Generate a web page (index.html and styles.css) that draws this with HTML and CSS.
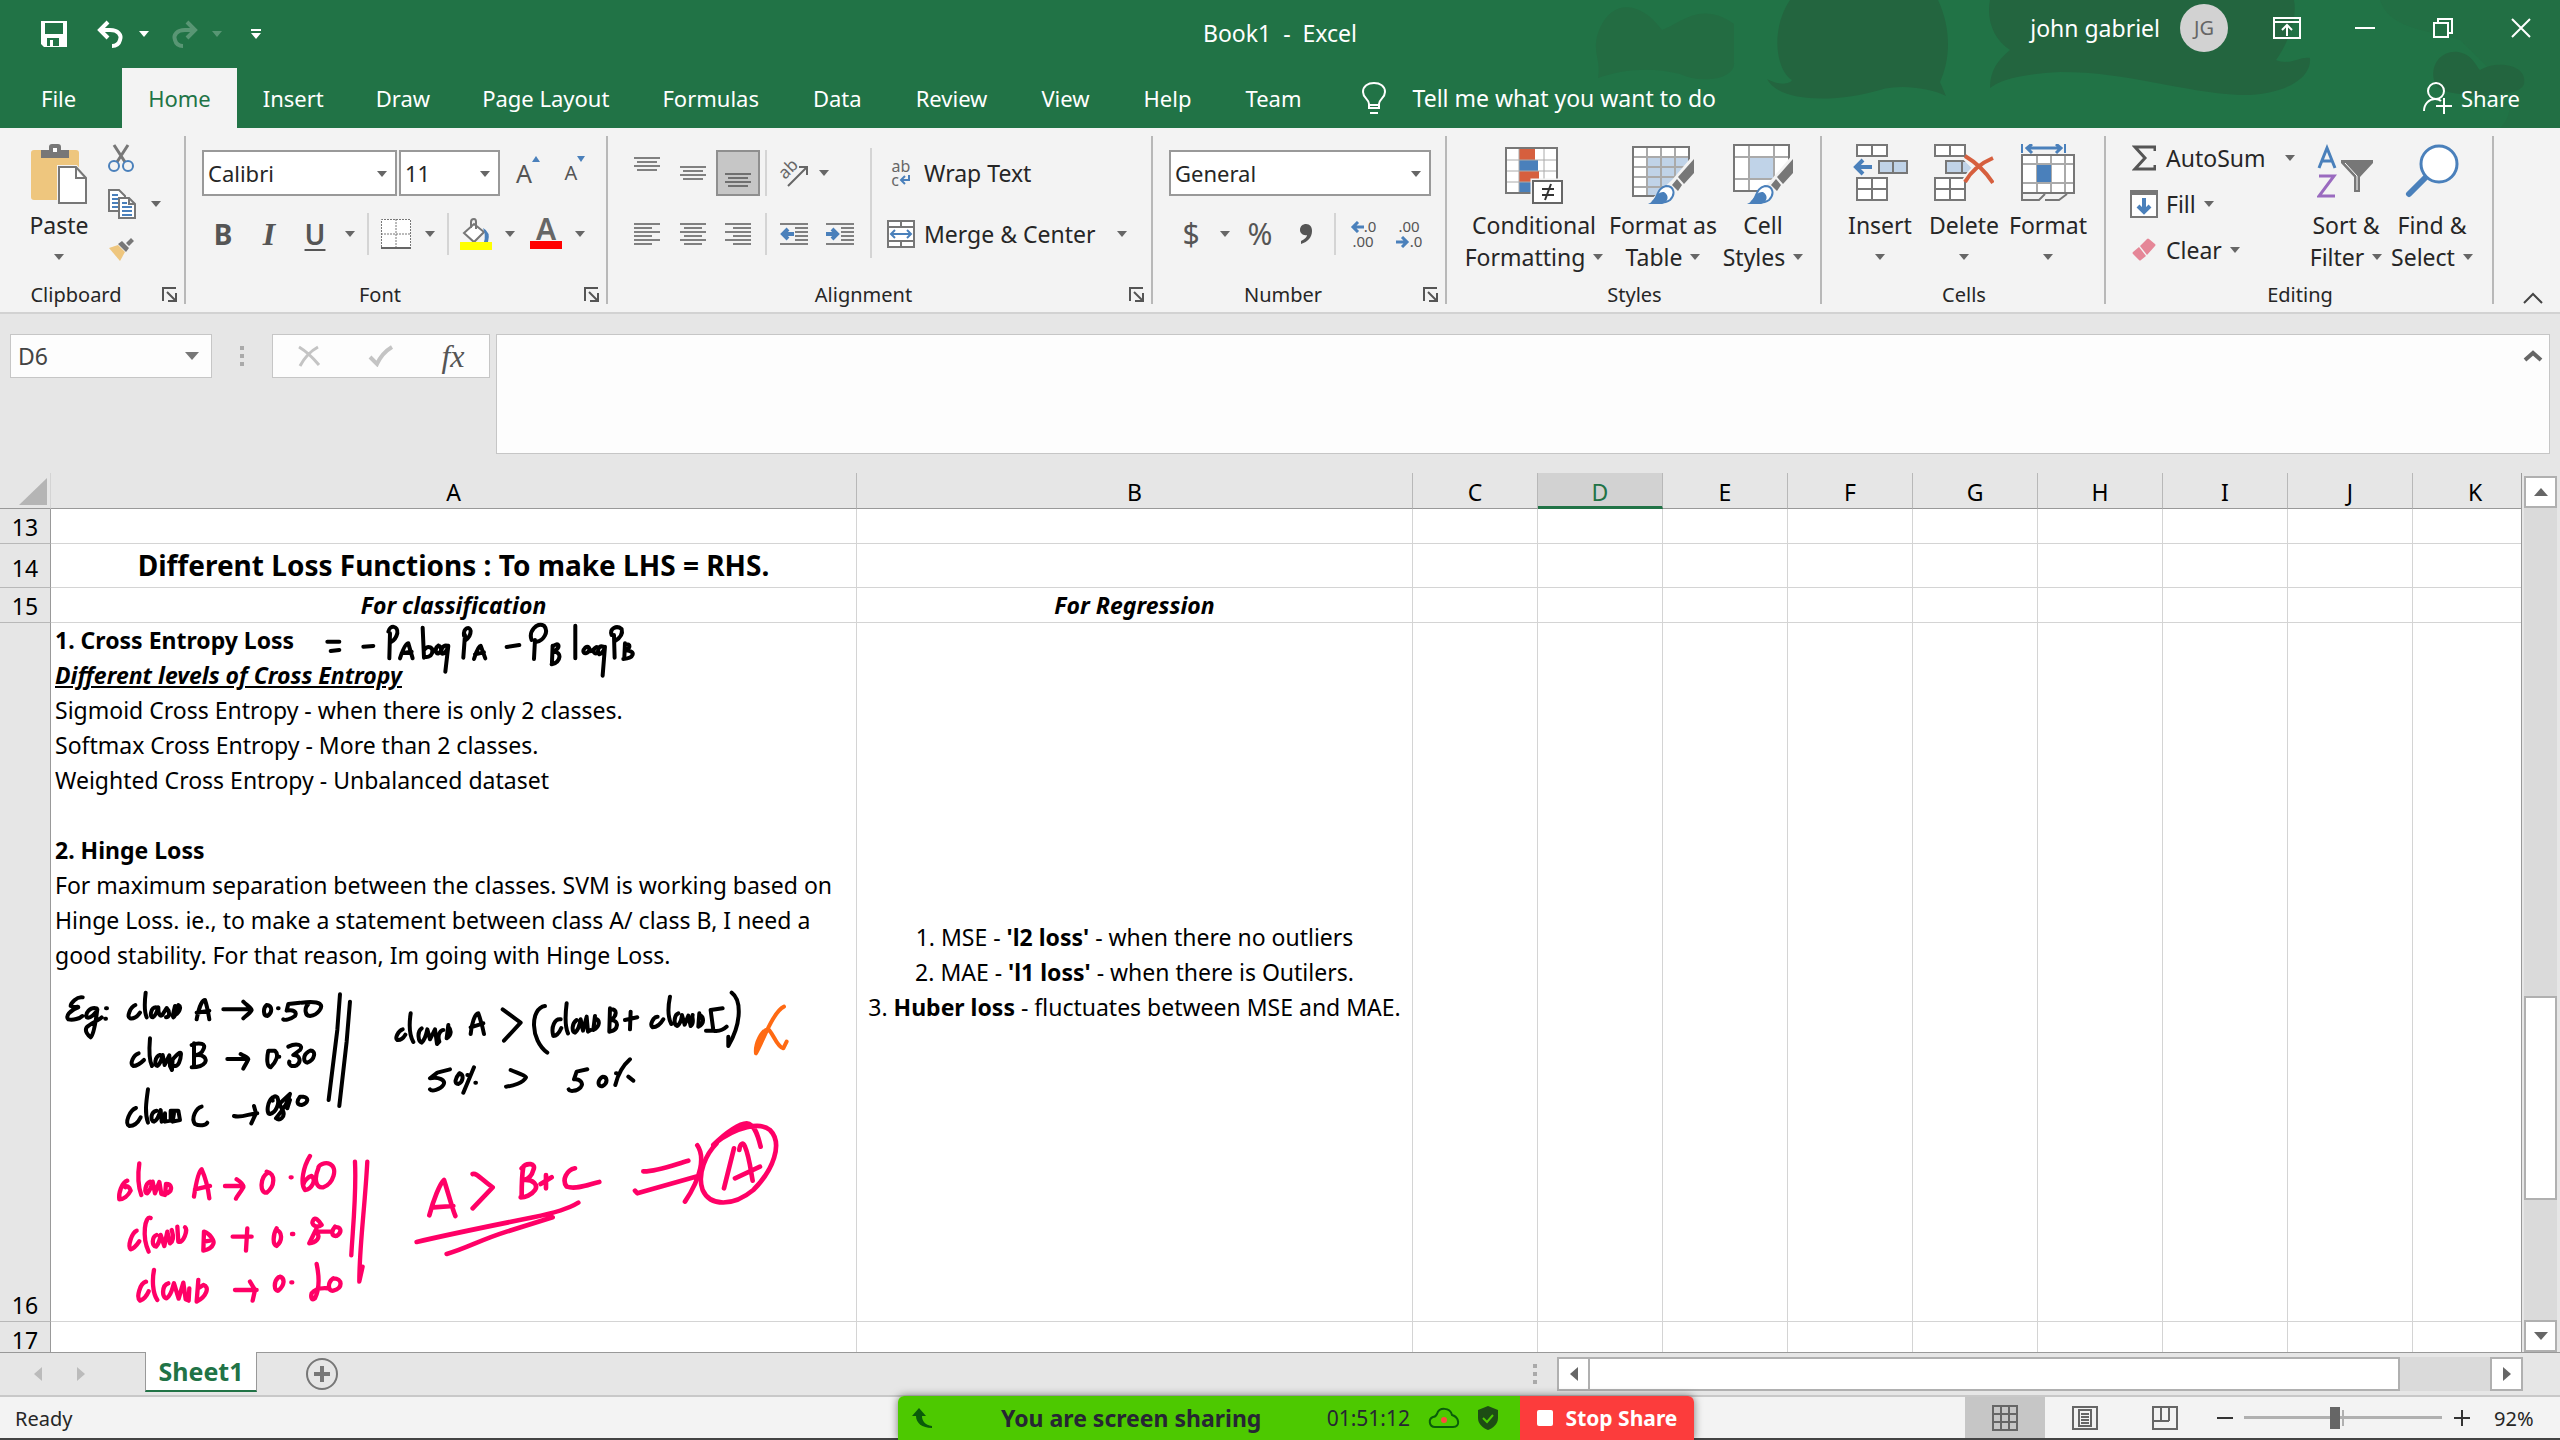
FILE: index.html
```
<!DOCTYPE html>
<html lang="en">
<head>
<meta charset="utf-8">
<title>Book1 - Excel</title>
<link rel="stylesheet" href="styles.css">
</head>
<body>
<header class="top">
  <svg class="art" width="1060" height="128" viewBox="1500 0 1060 128" aria-hidden="true">
    <path fill="#236c42" d="M1598 78C1602 60 1590 50 1600 28C1612 0 1640 0 1662 30C1680 24 1700 0 1734 24V62C1736 80 1700 84 1680 74C1650 66 1620 70 1598 78Z"/>
    <path fill="#23653f" d="M1790 0H1938C1952 30 1950 60 1940 82L1946 96C1930 88 1900 84 1880 90C1840 102 1780 104 1767 79C1780 86 1790 84 1792 80C1776 70 1770 30 1790 0Z"/>
    <path fill="#23653f" d="M1990 0H2294C2298 20 2286 46 2276 60C2290 66 2300 56 2310 58C2312 80 2280 96 2240 95C2180 92 2130 72 2060 72C2020 74 2000 80 1990 88C1990 70 1998 60 2010 50C1994 40 1986 20 1990 0Z"/>
    <path fill="#236c42" d="M2380 0H2560V128H2500C2530 100 2480 60 2460 40C2430 30 2390 30 2380 0Z" opacity=".5"/>
    <path fill="#23653f" d="M2434 80C2430 62 2444 50 2458 52C2472 54 2476 66 2480 70C2496 60 2528 64 2524 84C2520 96 2480 98 2460 94C2446 92 2436 90 2434 80Z"/>
  </svg>
  <div class="titlebar">
    <div class="quick">
      <button class="q-save" aria-label="Save"><svg width="26" height="26" viewBox="0 0 26 26"><path fill="#fff" fill-rule="evenodd" d="M0 0H26V26H3L0 23ZM4 2V13H22V2ZM6 17V25H9V19H12V25H18V17Z"/></svg></button>
      <button aria-label="Undo"><svg width="28" height="28" viewBox="0 0 28 28"><path fill="none" stroke="#fff" stroke-width="4" d="M11 2L3 10L11 18M3 10H13C21 10 25 15 23 20C22 24 19 26 15 26"/></svg></button>
      <span class="caret"></span>
      <button class="faded q-redo" aria-label="Redo"><svg width="28" height="28" viewBox="0 0 28 28"><path fill="none" stroke="#fff" stroke-width="4" d="M17 2L25 10L17 18M25 10H15C7 10 3 15 5 20C6 24 9 26 13 26"/></svg></button>
      <span class="caret faded"></span>
      <button class="q-more" aria-label="Customize Quick Access Toolbar"><svg width="10" height="10" viewBox="0 0 10 10"><path fill="#fff" d="M0 0H10V2H0ZM0 4H10L5 10Z"/></svg></button>
    </div>
    <h1 class="title">Book1&nbsp; -&nbsp; Excel</h1>
    <div class="account">
      <span>john gabriel</span>
      <span class="avatar">JG</span>
      <button class="win" aria-label="Ribbon Display Options"><svg width="28" height="22" viewBox="0 0 28 22" fill="none" stroke="#fff" stroke-width="2"><path d="M1 1H27V21H1ZM1 5H27M14 19V9M9 13L14 8L19 13"/></svg></button>
      <button class="win" aria-label="Minimize"><svg width="20" height="20" viewBox="0 0 20 20"><path stroke="#fff" stroke-width="2" d="M0 10H20"/></svg></button>
      <button class="win" aria-label="Restore"><svg width="20" height="20" viewBox="0 0 20 20" fill="none" stroke="#fff" stroke-width="2"><path d="M1 5H15V19H1ZM5 5V1H19V15H15"/></svg></button>
      <button class="win" aria-label="Close"><svg width="20" height="20" viewBox="0 0 20 20"><path stroke="#fff" stroke-width="2" d="M1 1L19 19M19 1L1 19"/></svg></button>
    </div>
  </div>
  <nav class="tabs">
    <button class="tab file">File</button>
    <button class="tab active">Home</button>
    <button class="tab">Insert</button>
    <button class="tab">Draw</button>
    <button class="tab">Page Layout</button>
    <button class="tab">Formulas</button>
    <button class="tab">Data</button>
    <button class="tab">Review</button>
    <button class="tab">View</button>
    <button class="tab">Help</button>
    <button class="tab">Team</button>
    <button class="tell"><svg width="24" height="32" viewBox="0 0 24 32" fill="none" stroke="#fff" stroke-width="2"><path d="M7 22C7 17 1 16 1 10C1 4 6 1 12 1S23 4 23 10C23 16 17 17 17 22V26H7ZM7 23H17M8 31H16"/></svg>Tell me what you want to do</button>
    <button class="share"><svg width="30" height="32" viewBox="0 0 30 32" fill="none" stroke="#fff" stroke-width="2"><circle cx="13" cy="9" r="8"/><path d="M1 29C1 22 6 17 12 17C15 17 17 18 18 19M21 16V32M13 24H29"/></svg>Share</button>
  </nav>
</header>

<section class="ribbon">
  <div class="group g-clip">
    <div class="body">
      <button class="big w84"><svg width="56" height="60" viewBox="0 0 56 60"><path fill="#eec67e" d="M0 9Q0 6 3 6H45Q48 6 48 9V53Q48 56 45 56H3Q0 56 0 53Z"/><path fill="#777" d="M10 6H18V3Q18 0 21 0H27Q30 0 30 3V6H38V14H10Z"/><path fill="#fff" d="M22 4H26V8H22Z"/><path fill="#fff" stroke="#f3f3f3" stroke-width="4" d="M28 23H45L55 34V59H28Z"/><path fill="#fff" stroke="#777" stroke-width="2" d="M28 23H45L55 34V59H28ZM45 23V34H55"/></svg><span>Paste</span><span><i class="caret"></i></span></button>
      <div class="stack tight">
        <button aria-label="Cut"><svg width="26" height="28" viewBox="0 0 26 28"><path fill="none" stroke="#777" stroke-width="3" d="M6 1L17 18M20 1L9 18"/><g fill="none" stroke="#4a80bb" stroke-width="2"><circle cx="6" cy="22" r="5"/><circle cx="20" cy="22" r="5"/></g></svg></button>
        <button aria-label="Copy"><svg class="copyicon" width="28" height="30" viewBox="0 0 28 30"><path fill="#fff" stroke="#777" stroke-width="2" d="M1 1H11L17 7V22H1Z"/><path stroke="#4a80bb" stroke-width="2" d="M4 6H10M4 10H10M4 14H10M4 18H10"/><path fill="#fff" stroke="#777" stroke-width="2" d="M11 9H21L27 15V29H11ZM21 9V15H27"/><path stroke="#4a80bb" stroke-width="2" d="M14 14H19M14 18H24M14 22H24M14 26H24"/></svg><i class="caret"></i></button>
        <button aria-label="Format Painter"><svg width="26" height="24" viewBox="0 0 26 24"><path fill="#eec67e" d="M1 10L10 7L17 14L12 23Z"/><path fill="#777" d="M10 6L14 3L21 10L18 14ZM18 5L23 0L26 3L21 8Z"/></svg></button>
      </div>
    </div>
    <div class="caption"><span>Clipboard</span><button aria-label="Clipboard settings"><svg width="15" height="15" viewBox="0 0 15 15" fill="none" stroke="#555" stroke-width="2"><path d="M1 14V1H14M5 5L13 13M14 6V14H6"/></svg></button></div>
  </div>
  <div class="group g-font">
    <div class="body"><div class="rows">
      <div class="line r1">
        <span class="combo c-font"><select aria-label="Font"><option>Calibri</option></select></span>
        <span class="combo c-size"><select aria-label="Font Size"><option>11</option></select></span>
        <button class="w52 grow" aria-label="Increase Font Size"><span>A</span><svg width="8" height="6"><path fill="#4a80bb" d="M0 6H8L4 0Z"/></svg></button>
        <button class="w42 shrink" aria-label="Decrease Font Size"><span>A</span><svg width="8" height="6"><path fill="#4a80bb" d="M0 0H8L4 6Z"/></svg></button>
      </div>
      <div class="line r2">
        <button class="w46 glyph bold">B</button><button class="w46 glyph ital">I</button><button class="w46 glyph under">U</button><button class="w24" aria-label="Underline options"><i class="caret"></i></button>
        <span class="sep"></span>
        <button class="w44" aria-label="Borders"><svg width="30" height="30" viewBox="0 0 30 30"><path fill="#fff" d="M0 0H30V30H0Z"/><path fill="none" stroke="#777" stroke-width="1" stroke-dasharray="2 1" d="M.5 28V.5H29.5V28M15 0V28M0 15H30"/><path stroke="#666" stroke-width="2" d="M0 29H30"/></svg></button><button class="w24" aria-label="Border options"><i class="caret"></i></button>
        <span class="sep"></span>
        <button class="w44" aria-label="Fill Color"><svg width="32" height="32" viewBox="0 0 32 32"><path fill="#fff" stroke="#777" stroke-width="2" d="M14 6L24 14L14 24L4 15Z"/><path fill="none" stroke="#777" stroke-width="2" d="M11 10V4Q11 1 14 1Q16 1 16 4V11"/><path fill="#4a80bb" d="M23 10Q31 14 28 24H24Q26 17 23 10Z"/><path fill="#ff0" d="M0 24H32V32H0Z"/></svg></button><button class="w24" aria-label="Fill options"><i class="caret"></i></button>
        <button class="w48 fontcolor" aria-label="Font Color"><span>A</span></button><button class="w20" aria-label="Font color options"><i class="caret"></i></button>
      </div>
    </div></div>
    <div class="caption"><span>Font</span><button aria-label="Font settings"><svg width="15" height="15" viewBox="0 0 15 15" fill="none" stroke="#555" stroke-width="2"><path d="M1 14V1H14M5 5L13 13M14 6V14H6"/></svg></button></div>
  </div>
  <div class="group g-align">
    <div class="body"><div class="rows">
      <div class="line r1">
        <button class="w46 up" aria-label="Top Align"><svg width="26" height="14" viewBox="0 0 26 14"><path stroke="#808080" stroke-width="2" d="M0 1H26M3 5H23M0 9H26M3 13H23"/></svg></button>
        <button class="w46" aria-label="Middle Align"><svg width="26" height="14" viewBox="0 0 26 14"><path stroke="#808080" stroke-width="2" d="M0 1H26M3 5H23M0 9H26M3 13H23"/></svg></button>
        <button class="w44 pressed down" aria-label="Bottom Align"><svg width="26" height="14" viewBox="0 0 26 14"><path stroke="#707070" stroke-width="2" d="M0 1H26M3 5H23M0 9H26M3 13H23"/></svg></button>
        <span class="sep"></span>
        <button class="w44" aria-label="Orientation"><svg width="30" height="28" viewBox="0 0 30 28"><path fill="none" stroke="#666" stroke-width="2" d="M9 27L28 8M20 8H28V16"/><text x="6" y="21" font-size="17" fill="#666" transform="rotate(-45 6 21)">ab</text></svg></button><button class="w16" aria-label="Orientation options"><i class="caret"></i></button>
      </div>
      <div class="line r2">
        <button class="w46" aria-label="Align Left"><svg width="26" height="22" viewBox="0 0 26 22"><path stroke="#808080" stroke-width="2" d="M0 1H26M0 5H18M0 9H26M0 13H18M0 17H26M0 21H18"/></svg></button>
        <button class="w46" aria-label="Center"><svg width="26" height="22" viewBox="0 0 26 22"><path stroke="#808080" stroke-width="2" d="M0 1H26M4 5H22M0 9H26M4 13H22M0 17H26M4 21H22"/></svg></button>
        <button class="w44" aria-label="Align Right"><svg width="26" height="22" viewBox="0 0 26 22"><path stroke="#808080" stroke-width="2" d="M0 1H26M8 5H26M0 9H26M8 13H26M0 17H26M8 21H26"/></svg></button>
        <span class="sep"></span>
        <button class="w44" aria-label="Decrease Indent"><svg width="28" height="22" viewBox="0 0 28 22"><path stroke="#808080" stroke-width="2" d="M0 1H28M15 5H28M15 9H28M15 13H28M15 17H28M0 21H28"/><path fill="none" stroke="#4a80bb" stroke-width="4" d="M14 11H3M8 6L3 11L8 16"/></svg></button>
        <button class="w48" aria-label="Increase Indent"><svg width="28" height="22" viewBox="0 0 28 22"><path stroke="#808080" stroke-width="2" d="M0 1H28M15 5H28M15 9H28M15 13H28M15 17H28M0 21H28"/><path fill="none" stroke="#4a80bb" stroke-width="4" d="M0 11H11M6 6L11 11L6 16"/></svg></button>
      </div>
    </div>
    <span class="sep tall"></span>
    <div class="rows labelled">
      <button class="text"><span class="ico wrapico"><span>ab</span><span>c<svg width="12" height="10" viewBox="0 0 12 10" fill="none" stroke="#4a80bb" stroke-width="2"><path d="M10 0V5H2M6 1L2 5L6 9"/></svg></span></span>Wrap Text</button>
      <button class="text"><span class="ico"><svg width="28" height="28" viewBox="0 0 28 28"><path fill="#fff" stroke="#777" stroke-width="2" d="M1 1H27V27H1ZM1 7H27M1 21H27M14 1V7M14 21V27"/><path fill="none" stroke="#4a80bb" stroke-width="2" d="M4 14H24M8 10L4 14L8 18M20 10L24 14L20 18"/></svg></span>Merge &amp; Center<i class="caret far"></i></button>
    </div></div>
    <div class="caption"><span>Alignment</span><button aria-label="Alignment settings"><svg width="15" height="15" viewBox="0 0 15 15" fill="none" stroke="#555" stroke-width="2"><path d="M1 14V1H14M5 5L13 13M14 6V14H6"/></svg></button></div>
  </div>
  <div class="group g-num">
    <div class="body"><div class="rows">
      <div class="line r1"><span class="combo c-num"><select aria-label="Number Format"><option>General</option></select></span></div>
      <div class="line r2">
        <button class="w44 glyph sign">$</button><button class="w24" aria-label="Accounting options"><i class="caret"></i></button>
        <button class="w46 glyph sign">%</button>
        <button class="w46" aria-label="Comma Style"><svg width="12" height="20" viewBox="0 0 12 20"><path fill="#555" d="M6 0C10 0 12 3 12 7C12 13 8 18 1 20V17C5 15 7 13 7 11C3 12 0 9 0 6C0 2 3 0 6 0Z"/></svg></button>
        <span class="sep"></span>
        <button class="w44 decimals" aria-label="Increase Decimal"><span><svg width="14" height="12" viewBox="0 0 14 12" fill="none" stroke="#4a80bb" stroke-width="3"><path d="M14 6H3M8 1L3 6L8 11"/></svg>.0</span><span>.00</span></button>
        <button class="w48 decimals" aria-label="Decrease Decimal"><span>.00</span><span><svg width="14" height="12" viewBox="0 0 14 12" fill="none" stroke="#4a80bb" stroke-width="3"><path d="M0 6H11M6 1L11 6L6 11"/></svg>.0</span></button>
      </div>
    </div></div>
    <div class="caption"><span>Number</span><button aria-label="Number settings"><svg width="15" height="15" viewBox="0 0 15 15" fill="none" stroke="#555" stroke-width="2"><path d="M1 14V1H14M5 5L13 13M14 6V14H6"/></svg></button></div>
  </div>
  <div class="group g-styles">
    <div class="body">
      <button class="big w140"><svg width="58" height="60" viewBox="0 0 58 60"><path fill="#fff" d="M1 4H52V49H1Z"/><path fill="#d65f3e" d="M14 4H30V16H14ZM14 27H34V38H14Z"/><path fill="#4a80bb" d="M14 16H33V27H14ZM14 38H27V49H14Z"/><path fill="none" stroke="#aaa" stroke-width="1" d="M14 4V49M39 4V49M1 16H52M1 27H52M1 38H52"/><path fill="none" stroke="#777" stroke-width="2" d="M1 4H52V49H1Z"/><path fill="#fff" stroke="#f3f3f3" stroke-width="5" d="M28 37H57V59H28Z"/><path fill="#fff" stroke="#666" stroke-width="2" d="M28 37H57V59H28Z"/><path stroke="#333" stroke-width="2" d="M37 45H49M37 51H49M46 40L40 56"/></svg><span>Conditional</span><span>Formatting<i class="caret"></i></span></button>
      <button class="big w118"><svg width="62" height="60" viewBox="0 0 62 60"><path fill="#fff" d="M1 3H57V52H1Z"/><path fill="#c0d3e8" d="M15 13H57V52H15Z"/><path fill="none" stroke="#aaa" stroke-width="2" d="M15 3V52M29 3V52M43 3V52M1 13H57M1 23H57M1 33H57M1 43H57"/><path fill="none" stroke="#777" stroke-width="2" d="M1 3H57V52H1Z"/><path fill="#f3f3f3" d="M62 10V60H14L40 36Z"/><path fill="#777" d="M62 15V29L52 40L46 33ZM45 35L50 41L46 47L40 41Z"/><path fill="#fff" stroke="#4a80bb" stroke-width="2" d="M20 58C26 56 24 44 34 42C42 42 44 50 38 56C34 59 26 59 20 58Z"/><path fill="#4a80bb" d="M16 60C24 57 24 47 32 48C38 52 36 58 30 60Z"/></svg><span>Format as</span><span>Table<i class="caret"></i></span></button>
      <button class="big w82"><svg width="60" height="60" viewBox="0 0 60 60"><path fill="#fff" d="M1 1H56V47H1Z"/><path fill="#c0d3e8" d="M16 13H41V35H16Z"/><path fill="none" stroke="#aaa" stroke-width="2" d="M16 1V47M41 1V47M1 13H56M1 35H56"/><path fill="none" stroke="#777" stroke-width="2" d="M1 1H56V47H1Z"/><path fill="#f3f3f3" d="M60 10V60H14L38 36Z"/><path fill="#777" d="M60 15V29L50 40L44 33ZM43 35L48 41L44 47L38 41Z"/><path fill="#fff" stroke="#4a80bb" stroke-width="2" d="M18 58C24 56 22 44 32 42C40 42 42 50 36 56C32 59 24 59 18 58Z"/><path fill="#4a80bb" d="M14 60C22 57 22 47 30 48C36 52 34 58 28 60Z"/></svg><span>Cell</span><span>Styles<i class="caret"></i></span></button>
    </div>
    <div class="caption plain"><span>Styles</span></div>
  </div>
  <div class="group g-cells">
    <div class="body">
      <button class="big w84"><svg width="56" height="60" viewBox="0 0 56 60" stroke="#777" stroke-width="2"><path fill="#fff" d="M5 1H35V12H5ZM20 1V12M5 34H35V56H5ZM20 34V56M5 45H35"/><path fill="#c0d3e8" d="M27 17H55V29H27ZM41 17V29"/><path fill="none" stroke="#4a80bb" stroke-width="4" d="M20 23H4M11 16L4 23L11 30"/></svg><span>Insert</span><span><i class="caret"></i></span></button>
      <button class="big w84"><svg width="60" height="60" viewBox="0 0 60 60" stroke="#777" stroke-width="2"><path fill="#fff" d="M1 1H31V12H1ZM16 1V12M1 34H31V56H1ZM16 34V56M1 45H31"/><path fill="#c0d3e8" d="M12 17H40V29H12ZM28 17V29"/><path fill="none" stroke="#f3f3f3" stroke-width="9" d="M32 12L58 38M58 14Q40 24 32 38"/><path fill="none" stroke="#d65f3e" stroke-width="4" d="M31 12Q48 22 59 39M59 14Q40 22 31 38"/></svg><span>Delete</span><span><i class="caret"></i></span></button>
      <button class="big w84"><svg width="54" height="60" viewBox="0 0 54 60"><path fill="none" stroke="#4a80bb" stroke-width="2" d="M1 0V9M44 0V9"/><path fill="none" stroke="#4a80bb" stroke-width="3" d="M6 4H40M11 0L6 4L11 9M35 0L40 4L35 9"/><path fill="#fff" d="M1 11H53V49H1Z"/><path fill="none" stroke="#aaa" stroke-width="2" d="M16 11V49M30 11V49M44 11V49M1 20H53M1 39H53"/><path fill="#4a80bb" d="M16 21H30V38H16Z"/><path fill="none" stroke="#777" stroke-width="2" d="M1 11H53V49H1ZM1 49V56H18L24 50M24 56H38L46 50"/></svg><span>Format</span><span><i class="caret"></i></span></button>
    </div>
    <div class="caption plain"><span>Cells</span></div>
  </div>
  <div class="group g-edit">
    <div class="body">
      <div class="stack words">
        <button><span class="ico"><svg width="24" height="26" viewBox="0 0 24 26"><path fill="none" stroke="#555" stroke-width="3" d="M23 6V2H3L13 13L3 24H23V20"/></svg></span>AutoSum<i class="caret far"></i></button>
        <button><span class="ico"><svg width="28" height="28" viewBox="0 0 28 28"><path fill="#fff" stroke="#777" stroke-width="2" d="M1 1H27V27H1Z"/><path fill="#777" d="M0 0H28V5H0Z"/><path fill="none" stroke="#4a80bb" stroke-width="4" d="M14 8V22M8 16L14 22L20 16"/></svg></span>Fill<i class="caret"></i></button>
        <button><span class="ico"><svg width="24" height="24" viewBox="0 0 24 24"><path fill="#e58697" d="M8 8L15 1Q16 0 17 1L23 6Q24 7 23 8L15 17ZM7 9L14 18L9 22Q8 23 7 22L1 16Q0 15 1 14Z"/></svg></span>Clear<i class="caret"></i></button>
      </div>
      <button class="big w86"><svg width="58" height="60" viewBox="0 0 58 60"><path fill="none" stroke="#4a80bb" stroke-width="3" d="M2 24L10 4L18 24M5 17H15"/><path fill="none" stroke="#9a6abf" stroke-width="3" d="M2 32H17L2 52H18"/><path fill="#777" d="M24 16H56V19L43 33V48H37V33L24 19Z"/><path stroke="#fff" d="M28 19L40 32V46" fill="none"/></svg><span>Sort &amp;</span><span>Filter<i class="caret"></i></span></button>
      <button class="big w86"><svg width="54" height="60" viewBox="0 0 54 60"><path stroke="#4a80bb" stroke-width="6" stroke-linecap="round" d="M4 50L20 34"/><circle cx="34" cy="20" r="18" fill="#fff" stroke="#4a80bb" stroke-width="3"/></svg><span>Find &amp;</span><span>Select<i class="caret"></i></span></button>
    </div>
    <div class="caption plain"><span>Editing</span></div>
  </div>
  <button class="collapse" aria-label="Collapse the Ribbon"><svg width="20" height="12" viewBox="0 0 20 12" fill="none" stroke="#444" stroke-width="2"><path d="M1 11L10 2L19 11"/></svg></button>
</section>

<section class="formula">
  <div class="namebox"><input aria-label="Name Box" value="D6"><svg width="14" height="8"><path fill="#777" d="M0 0H14L7 8Z"/></svg></div>
  <span class="dots"></span>
  <div class="fxbox">
    <button aria-label="Cancel"><svg width="24" height="22" viewBox="0 0 24 22" fill="none" stroke="#c4c4c4" stroke-width="3"><path d="M2 2Q12 8 22 20M21 2Q10 8 3 21"/></svg></button>
    <button aria-label="Enter"><svg width="26" height="22" viewBox="0 0 26 22" fill="none" stroke="#c4c4c4" stroke-width="4"><path d="M2 12L9 19Q14 8 24 2"/></svg></button>
    <button class="fx">fx</button>
  </div>
  <textarea aria-label="Formula Bar"></textarea>
  <button class="expand" aria-label="Collapse Formula Bar"><svg width="20" height="12" viewBox="0 0 20 12" fill="none" stroke="#666" stroke-width="4"><path d="M2 10L10 3L18 10"/></svg></button>
</section>

<main class="sheet">
  <div class="grid">
    <table>
      <colgroup><col class="c-row"><col class="c-a"><col class="c-b"><col class="c-n" span="9"></colgroup>
      <thead><tr><th class="corner"><svg width="28" height="27"><path fill="#b5b5b5" d="M28 0V27H0Z"/></svg></th><th>A</th><th>B</th><th>C</th><th class="sel">D</th><th>E</th><th>F</th><th>G</th><th>H</th><th>I</th><th>J</th><th>K</th></tr></thead>
      <tbody>
        <tr class="row"><th>13</th><td></td><td></td><td></td><td></td><td></td><td></td><td></td><td></td><td></td><td></td><td></td></tr>
        <tr class="row head"><th>14</th><td class="big-title">Different Loss Functions : To make LHS = RHS.</td><td></td><td></td><td></td><td></td><td></td><td></td><td></td><td></td><td></td><td></td></tr>
        <tr class="row"><th>15</th><td class="sub">For classification</td><td class="sub">For Regression</td><td></td><td></td><td></td><td></td><td></td><td></td><td></td><td></td><td></td></tr>
        <tr class="row notes"><th>16</th>
          <td class="loss"><b>1. Cross Entropy Loss</b><br><b><i><u>Different levels of Cross Entropy</u></i></b><br>Sigmoid Cross Entropy - when there is only 2 classes.<br>Softmax Cross Entropy - More than 2 classes.<br>Weighted Cross Entropy - Unbalanced dataset<br><br><b>2. Hinge Loss</b><br>For maximum separation between the classes. SVM is working based on<br>Hinge Loss. ie., to make a statement between class A/ class B, I need a<br>good stability. For that reason, Im going with Hinge Loss.
            <svg class="ink" width="805" height="698" viewBox="51 623 805 698" aria-hidden="true">
              <!-- entropy formula -->
              <g transform="translate(310 615) scale(.3333)" stroke="#000" stroke-width="12">
                <path d="M52 80H88M62 108L88 105M160 95L190 93M240 55L238 130M235 50C240 28 265 32 262 55C258 72 250 78 242 82M270 130C280 100 288 85 295 85L308 130M275 115L305 110"/>
                <path d="M338 38L342 128M342 105C355 88 372 98 366 115C362 126 350 128 342 124M385 92C374 98 375 118 386 115C396 110 396 95 385 92M412 92C398 88 390 108 396 116C404 118 412 105 415 92L406 170M465 60L460 128M462 62C460 38 480 32 482 48C482 65 472 72 466 76M492 132C500 105 508 92 512 92L526 130M495 118L522 112"/>
                <path d="M590 96L628 90M675 75L672 132M665 75C655 50 680 20 702 32C718 50 700 78 680 80M728 92L726 142M728 95C745 78 755 95 732 110C755 110 755 140 725 148M796 32V130M826 98C814 110 824 122 836 110C842 98 834 92 826 98M836 108C846 112 852 100 860 96C846 102 850 120 862 114"/>
                <path d="M880 95C865 90 860 110 868 118C878 115 885 100 885 95L878 182M912 60L914 128M905 60C898 40 920 30 935 42C940 60 925 72 915 78M945 85L943 130M945 88C965 85 960 100 948 106C980 108 972 130 940 132"/>
              </g>
              <!-- class probabilities, first example -->
              <g transform="translate(50 980) scale(.3333)" stroke="#000" stroke-width="12">
                <path d="M98 52C80 48 62 70 62 78C70 84 85 78 85 82C60 90 45 110 55 118C70 122 90 115 97 108M140 85C120 80 105 100 110 112C120 118 138 100 142 88C138 120 130 165 122 172C108 160 105 150 110 142C120 130 145 122 155 112M168 85H171M166 116H168"/>
                <path d="M256 75C240 82 230 110 240 115C250 117 262 110 270 98M287 38C283 70 283 95 290 112M318 82C302 82 298 112 308 112C318 108 322 90 325 82C325 100 328 110 336 106L350 84C358 92 362 110 348 112M375 78L368 108C390 100 395 80 385 75C375 90 380 108 370 112"/>
                <path d="M440 118C445 90 455 60 465 60C472 80 475 100 478 118M440 98L478 92M520 88H600M580 65C590 75 605 85 605 90C600 100 585 110 580 115M650 75C638 85 640 108 652 108C668 100 668 75 650 75M684 85H686M750 68L715 72L710 92C730 88 742 95 735 108C722 118 705 122 700 118M775 72C762 85 765 108 780 108C805 105 820 80 810 72C800 65 780 65 755 68"/>
                <path d="M870 43L862 150L836 360M900 65L890 185L868 378"/>
                <path d="M266 220C250 225 238 252 250 258C262 258 272 250 282 240M300 175C297 210 297 240 306 258M330 225C314 230 312 258 322 258C332 250 336 235 338 225L344 255L358 226L360 258L366 270L368 238C380 225 392 212 393 222C392 242 385 260 374 258"/>
                <path d="M432 190V262M425 195C450 185 470 192 460 208C455 222 440 225 435 226C460 222 472 235 465 248C455 262 435 262 425 262M532 237H590M572 222C585 230 595 232 595 238C590 250 582 260 580 266M655 212C650 235 650 260 662 262C675 250 690 225 675 212ZM686 230H688M715 200C740 188 762 195 750 210L730 225C750 225 755 245 740 256C725 262 715 255 718 245M775 215C758 225 760 248 772 248C795 240 800 210 780 212"/>
                <path d="M258 384C240 390 222 430 238 438C252 438 264 428 272 412M294 328C288 370 284 400 294 428M320 392C302 395 300 422 312 425C325 420 330 395 332 390L335 425M345 400V425L362 422V392L385 392L390 420L368 425L372 400M455 380C438 385 422 415 435 432C450 440 468 435 472 428"/>
                <path d="M552 408C575 415 600 400 622 400M612 378L618 400L604 430M668 352C652 365 648 400 660 402C678 398 690 370 682 352C675 345 665 352 668 362M690 370L720 342C715 370 690 400 678 415C690 425 705 410 700 395L690 375M720 360L712 385M750 350C738 365 742 375 755 375C775 370 778 352 760 350Z"/>
              </g>
              <!-- second example -->
              <g transform="translate(50 980) scale(.3333)" stroke="#ff0066" stroke-width="13">
                <path d="M232 602C215 608 205 640 208 658C220 658 234 648 242 632C238 620 230 616 226 622M268 550C262 590 265 620 274 645M300 605C285 612 282 638 292 640C302 630 306 612 308 605L315 640L328 606L334 642L345 645L348 612C365 612 370 630 352 640"/>
                <path d="M432 650C438 610 445 575 455 568C465 590 475 630 478 655M435 628L480 618M525 618H580M560 598C575 608 582 615 580 622C570 640 560 650 558 656M655 578C630 590 628 640 650 638C675 620 678 580 650 575M722 592H725M780 528C760 560 750 610 765 630C785 628 800 600 785 588C775 590 760 605 760 615M805 565C790 600 800 625 820 622C850 610 865 565 840 552C825 545 805 555 805 565"/>
                <path d="M915 545C920 640 908 750 904 826M952 545C945 680 928 800 928 905L938 860"/>
                <path d="M260 752C245 758 232 800 242 808C252 806 260 796 268 784M302 714C285 705 275 770 296 815M320 765C305 770 305 800 318 800C328 790 330 775 332 765L343 798L352 755L360 790C376 780 368 760 365 750M382 740L385 785C400 790 415 750 405 742M462 755L460 812M462 755C480 760 495 785 490 792C485 805 470 810 460 812M462 785L480 782"/>
                <path d="M548 770H605M592 745L588 812M680 745C668 765 668 795 680 798C700 780 695 755 680 750M726 762H730M790 720C780 735 800 745 815 735C805 720 795 710 790 720M800 745L778 790C795 790 815 775 800 755L845 755M855 740C842 755 845 770 860 768C880 755 870 738 855 742"/>
                <path d="M288 905C270 910 258 952 270 962C282 958 290 948 296 934M312 870C306 900 308 940 322 960M355 910C335 915 335 955 350 955C365 945 368 920 372 910L386 956L400 908L407 958L416 962L418 925M445 900L440 965C470 950 480 920 460 915L445 925M555 930H620M600 905L615 930L608 962"/>
                <path d="M685 892C670 905 672 935 685 932C705 915 705 895 690 890M724 907H727M800 852C808 890 810 925 795 955C785 965 782 950 785 940C800 920 830 925 835 925M850 895C830 910 835 935 850 932C880 925 878 895 850 895"/>
              </g>
              <!-- comparison -->
              <g transform="translate(380 980) scale(.3333)" stroke="#000" stroke-width="12">
                <path d="M68 148C54 152 44 175 52 180C62 181 70 174 76 164M92 100C86 140 88 165 100 186M125 145C110 155 115 185 125 188C138 175 140 155 142 148L150 178L165 148L171 192L178 185C170 160 185 150 190 150M205 135L200 175C215 165 215 150 205 140M272 162C275 130 285 100 295 100C302 120 308 140 312 162M272 142L310 130M368 88L422 128L372 182M495 78C450 85 450 180 502 218"/>
                <path d="M542 118C525 115 512 140 520 168C530 168 538 158 544 144M560 70C555 110 555 140 564 160M590 120C575 130 575 155 585 158C595 150 600 130 602 118L609 152L620 110L624 155L632 150M645 108L640 150C660 140 662 120 645 115M690 85L688 155M690 88C715 85 710 110 692 120C720 120 715 150 690 155M735 120L772 112M752 95L750 148"/>
                <path d="M833 110C820 110 808 135 818 142C832 142 842 132 850 118M870 50C862 90 865 115 874 132M895 100C882 105 880 135 892 138C902 130 905 115 906 105L914 134L925 107L932 138C945 130 935 115 938 105M958 100L955 140C975 130 972 110 958 105M1028 85L992 90L1000 150M978 152H1000C1020 155 1035 145 1040 140M1055 38C1085 60 1085 130 1045 198V170"/>
                <path d="M210 268L172 278L150 295C175 290 200 300 190 315C180 330 155 335 150 328M238 280C225 295 222 312 235 312C250 305 252 285 240 280M282 262L250 338M262 285H264M286 308H288M392 270C410 278 435 285 438 292C430 308 400 318 378 320M622 268L590 275L582 298C600 295 612 310 602 322C590 335 568 335 566 328M665 292C650 305 655 322 668 318C685 308 682 290 668 290M750 238C725 260 712 290 706 315M708 280H710M745 290L760 302"/>
                <path stroke="#ff6a13" d="M1212 80C1180 95 1150 180 1128 220C1125 190 1145 150 1165 148C1180 160 1190 200 1210 205L1220 185"/>
              </g>
              <g transform="translate(380 980) scale(.3333)" stroke="#ff0066" stroke-width="14">
                <path d="M148 706C160 660 180 610 192 600C205 640 215 680 226 708M160 682L220 678M278 582C290 578 300 595 338 622L278 685M430 560C425 590 425 630 425 650M425 565C440 545 470 550 460 570C455 590 440 598 432 600C460 598 475 615 465 630C455 645 435 652 422 652M482 612L515 592M498 585V625M585 565C560 570 545 600 560 620C590 630 630 612 658 606"/>
                <path d="M110 786C220 760 380 728 460 712C510 702 560 690 595 668M200 822C260 805 300 780 380 755L518 712M790 574C830 575 880 555 925 542M765 632L772 640L955 588M952 496C975 530 965 590 915 665"/>
                <path d="M1000 495C1040 455 1080 430 1100 430C1125 432 1135 470 1142 500M1005 490C1070 440 1140 425 1170 450C1210 490 1180 570 1120 630C1060 680 990 680 968 630C950 580 980 520 1010 490M1062 505L1032 625M1078 510C1080 490 1090 485 1095 500C1108 530 1112 570 1118 602M1065 595L1140 560"/>
              </g>
            </svg>
          </td>
          <td class="regr">1. MSE - <b>'l2 loss'</b> - when there no outliers<br>2. MAE - <b>'l1 loss'</b> - when there is Outilers.<br>3. <b>Huber loss</b> - fluctuates between MSE and MAE.</td><td></td><td></td><td></td><td></td><td></td><td></td><td></td><td></td><td></td></tr>
        <tr class="row last"><th>17</th><td></td><td></td><td></td><td></td><td></td><td></td><td></td><td></td><td></td><td></td><td></td></tr>
      </tbody>
    </table>
  </div>
  <div class="vscroll">
    <button aria-label="Scroll up"><svg width="14" height="8"><path fill="#666" d="M0 8H14L7 0Z"/></svg></button>
    <div class="vtrack"><div class="vthumb"></div></div>
    <button aria-label="Scroll down"><svg width="14" height="8"><path fill="#666" d="M0 0H14L7 8Z"/></svg></button>
  </div>
</main>

<section class="sheetbar">
  <div class="nav"><button aria-label="Previous sheet"><svg width="8" height="14"><path fill="#bbb" d="M8 0V14L0 7Z"/></svg></button><button aria-label="Next sheet"><svg width="8" height="14"><path fill="#bbb" d="M0 0V14L8 7Z"/></svg></button></div>
  <button class="sheettab">Sheet1</button>
  <button class="add" aria-label="New sheet"><svg width="32" height="32" viewBox="0 0 32 32" fill="none" stroke="#777"><circle cx="16" cy="16" r="15" stroke-width="2"/><path stroke-width="4" d="M16 8V24M8 16H24"/></svg></button>
  <span class="dots"></span>
  <div class="hscroll">
    <button aria-label="Scroll left"><svg width="8" height="14"><path fill="#666" d="M8 0V14L0 7Z"/></svg></button>
    <div class="htrack"><div class="hthumb"></div></div>
    <button aria-label="Scroll right"><svg width="8" height="14"><path fill="#666" d="M0 0V14L8 7Z"/></svg></button>
  </div>
</section>

<footer class="status">
  <span class="ready">Ready</span>
  <button class="view on" aria-label="Normal"><svg width="26" height="26" viewBox="0 0 26 26" fill="none" stroke="#666" stroke-width="2"><path d="M1 1H25V25H1ZM9 1V25M17 1V25M1 9H25M1 17H25"/></svg></button>
  <button class="view" aria-label="Page Layout"><svg width="26" height="24" viewBox="0 0 26 24" fill="none" stroke="#666" stroke-width="2"><path d="M1 1H25V23H1ZM7 4H19V20H7ZM9 8H17M9 11H17M9 14H17M9 17H17"/></svg></button>
  <button class="view" aria-label="Page Break Preview"><svg width="26" height="24" viewBox="0 0 26 24" fill="none" stroke="#666" stroke-width="2"><path d="M1 1H25V23H1ZM9 1V15M17 1V15M1 15H17"/></svg></button>
  <button class="zoom" aria-label="Zoom out"><svg width="16" height="16"><path stroke="#333" stroke-width="2" d="M0 8H16"/></svg></button>
  <input class="slider" type="range" min="0" max="100" value="46" aria-label="Zoom">
  <button class="zoom" aria-label="Zoom in"><svg width="16" height="16"><path stroke="#333" stroke-width="2" d="M0 8H16M8 0V16"/></svg></button>
  <span class="percent">92%</span>
</footer>

<div class="sharing">
  <div class="live">
    <svg width="20" height="20" viewBox="0 0 20 20"><path fill="#0a5c0a" d="M7 0L14 8H10C10 13 13 17 20 18V20C10 20 4 15 4 8H0Z"/></svg>
    <strong>You are screen sharing</strong>
    <time>01:51:12</time>
    <svg width="32" height="22" viewBox="0 0 32 22"><path fill="none" stroke="#0a5c0a" stroke-width="2" d="M7 20C1 20 0 12 5 10C7 10 8 9 9 7C11 0 22 0 24 8C31 10 33 20 25 20Z"/><circle cx="16" cy="13" r="3" fill="#ff4a3c"/></svg>
    <svg width="20" height="24" viewBox="0 0 20 24"><path fill="#1d4d14" d="M10 0L20 4V12C20 18 15 22 10 24C5 22 0 18 0 12V4Z"/><path fill="none" stroke="#4dc900" stroke-width="2" d="M5 12L9 16L15 9"/></svg>
  </div>
  <button class="stop"><span class="square"></span>Stop Share</button>
</div>
</body>
</html>
```
FILE: styles.css
```
* { box-sizing: border-box; }
body {
  margin: 0;
  height: 100vh;
  display: flex;
  flex-direction: column;
  overflow: hidden;
  border-bottom: 2px solid #444;
  background: #e6e6e6;
  color: #262626;
  font: 23px/32px "Noto Sans", "Open Sans", sans-serif;
}
button, input, select, textarea {
  font: inherit;
  color: inherit;
  background: none;
  border: 0;
  padding: 0;
  margin: 0;
  border-radius: 0;
  outline: 0;
}
button {
  display: flex;
  align-items: center;
  justify-content: center;
  flex: none;
  white-space: nowrap;
}
svg { display: block; flex: none; }
.caret {
  display: inline-block;
  flex: none;
  border: 5px solid transparent;
  border-top: 6px solid #666;
  border-bottom: 0;
}

/* title bar and tabs */
.top { position: relative; background: #217346; color: #fff; flex: none; }
.art { position: absolute; right: 0; top: 0; }
.titlebar {
  position: relative;
  display: grid;
  grid-template-columns: 1fr auto 1fr;
  height: 68px;
}
.quick { display: flex; align-items: center; padding-left: 41px; }
.quick .caret { border-top-color: #fff; }
.q-save { margin-right: 30px; }
.quick button + .caret { margin-left: 14px; }
.q-redo { margin-left: 21px; }
.q-more { margin-left: 29px; }
.faded { opacity: .25; }
.title { margin: 0; font-size: 23px; font-weight: 400; line-height: 66px; }
.account { display: flex; align-items: center; justify-content: flex-end; height: 56px; }
.avatar {
  width: 48px;
  height: 48px;
  margin: 0 20px;
  border-radius: 50%;
  background: #d2d2d2;
  color: #666;
  font-size: 20px;
  line-height: 48px;
  text-align: center;
}
.win { width: 78px; height: 56px; }
.tabs { position: relative; display: flex; height: 60px; }
.tab { padding: 0 26px; font-size: 22px; }
.tab.file { padding: 0 46px 0 41px; }
.tab.active { background: #f3f3f3; color: #217346; }
.tab:nth-child(n+6) { padding: 0 27px; }
.tell { margin-left: 34px; gap: 26px; }
.share { margin-left: auto; padding-right: 40px; gap: 8px; font-size: 22px; }

/* ribbon */
.ribbon {
  display: flex;
  flex: none;
  height: 186px;
  background: #f3f3f3;
  border-bottom: 2px solid #d2d2d2;
}
.group { display: flex; flex-direction: column; flex: none; position: relative; }
.group::after {
  content: "";
  position: absolute;
  right: 0;
  top: 8px;
  bottom: 8px;
  width: 2px;
  background: #b8b8b8;
}
.g-clip { width: 186px; }
.g-font { width: 422px; }
.g-align { width: 545px; }
.g-num { width: 294px; }
.g-styles { width: 375px; }
.g-cells { width: 284px; }
.g-edit { width: 388px; }
.body { display: flex; height: 150px; align-items: flex-start; }
.caption { display: flex; align-items: center; height: 35px; font-size: 20px; }
.caption span { flex: 1; text-align: center; }
.caption button { width: 34px; }
.big { flex-direction: column; justify-content: flex-start; padding-top: 16px; }
.big svg { margin-bottom: 5px; }
.big span { height: 32px; display: flex; align-items: center; gap: 8px; }
.w16 { width: 16px; }
.w20 { width: 20px; }
.w24 { width: 24px; }
.w42 { width: 42px; }
.w44 { width: 44px; }
.w46 { width: 46px; }
.w48 { width: 48px; }
.w52 { width: 52px; }
.w82 { width: 82px; }
.w84 { width: 84px; }
.w86 { width: 86px; }
.w118 { width: 118px; }
.w140 { width: 140px; }
.g-clip .body { padding-left: 17px; }
.g-styles .body { padding-left: 17px; }
.g-cells .body { padding-left: 16px; }
.g-font .body { padding-left: 14px; }
.g-font .r1 { padding-left: 2px; }
.g-align .body, .g-num .body { padding-left: 16px; }
.stack { display: flex; flex-direction: column; align-items: flex-start; padding-top: 7px; }
.stack button { height: 46px; }
.tight { padding-left: 7px; }
.tight button { gap: 15px; }
.words { width: 197px; padding-left: 24px; }
.words button { gap: 8px; }
.words .far { margin-left: 12px; }
.ico { width: 28px; display: flex; justify-content: center; }
.rows { display: grid; grid-template-rows: 46px 42px; row-gap: 17px; margin-top: 22px; }
.line { display: flex; align-items: stretch; }
.sep { width: 2px; margin: 0 5px; background: #d4d4d4; }
.tall { height: 110px; margin: 20px 15px 0 6px; }
.labelled { justify-items: start; }
.text { gap: 9px; }
.text .far { margin-left: 12px; }
.up svg { margin-bottom: 18px; }
.down svg { margin-top: 14px; }
.pressed { background: #c6c6c6; border: 2px solid #8f8f8f; }
.wrapico { flex-direction: column; align-items: center; font-size: 16px; line-height: 14px; color: #666; }
.wrapico span { display: flex; align-items: center; }
.combo {
  position: relative;
  display: flex;
  background: #fff;
  border: 2px solid #999;
}
.combo select { appearance: none; width: 100%; padding-left: 4px; font-size: 22px; }
.combo::after {
  content: "";
  position: absolute;
  right: 8px;
  top: 19px;
  border: 5px solid transparent;
  border-top: 6px solid #666;
  border-bottom: 0;
}
.c-font { width: 195px; margin-right: 2px; }
.c-size { width: 101px; }
.c-num { width: 262px; }
.grow, .shrink { color: #555; padding-left: 4px; }
.grow span { font-size: 25px; }
.shrink span { font-size: 20px; }
.grow svg, .shrink svg { margin-bottom: 28px; }
.glyph { font-size: 28px; color: #555; }
.bold { font-weight: 700; }
.ital { font-family: "Liberation Serif", serif; font-style: italic; font-weight: 700; font-size: 32px; }
.under { text-decoration: underline; text-underline-offset: 4px; text-decoration-thickness: 2px; font-weight: 600; }
.sign { font-size: 30px; }
.fontcolor span {
  width: 32px;
  height: 30px;
  font-size: 30px;
  font-weight: 600;
  line-height: 20px;
  color: #666;
  border-bottom: 8px solid #f00;
}
.decimals { flex-direction: column; font-size: 15px; line-height: 15px; color: #555; }
.decimals span { display: flex; align-items: center; }
.collapse { margin-left: auto; align-self: flex-end; padding: 0 17px 8px 0; }

/* formula bar */
.formula { display: flex; flex: none; height: 159px; padding: 20px 10px 0; }
.namebox {
  display: flex;
  align-items: center;
  width: 202px;
  height: 44px;
  padding: 0 12px 0 7px;
  background: #fdfdfd;
  border: 1px solid #c6c6c6;
}
.namebox input { flex: 1; min-width: 0; font-size: 23px; color: #444; }
.dots {
  width: 4px;
  height: 20px;
  background: repeating-linear-gradient(#aaa 0 4px, transparent 4px 8px);
}
.formula .dots { margin: 12px 28px; }
.fxbox {
  display: flex;
  width: 218px;
  height: 44px;
  margin-right: 6px;
  background: #fdfdfd;
  border: 1px solid #c6c6c6;
}
.fxbox button { flex: 1; }
.fxbox .fx { font: italic 32px "Liberation Serif", serif; color: #555; }
.formula textarea {
  flex: 1;
  height: 120px;
  resize: none;
  background: #fdfdfd;
  border: 1px solid #c6c6c6;
  border-right: 0;
}
.expand { align-items: flex-start; height: 120px; padding: 15px 6px 0; background: #fdfdfd; border: 1px solid #c6c6c6; border-left: 0; }

/* worksheet */
.sheet { display: flex; flex: 1; min-height: 0; }
.grid { flex: 1; min-width: 0; overflow: hidden; border-right: 1px solid #999; }
table { table-layout: fixed; width: 2538px; border-spacing: 0; background: #fff; color: #000; }
.c-row { width: 51px; }
.c-a { width: 806px; }
.c-b { width: 556px; }
.c-n { width: 125px; }
th { padding: 0; font-weight: 400; background: #e6e6e6; }
thead th { height: 36px; padding-top: 5px; border-right: 1px solid #b8b8b8; border-bottom: 1px solid #999; line-height: 28px; vertical-align: top; }
thead .corner { border-right-color: #d4d4d4; }
.corner svg { margin: 0 3px 0 auto; }
thead .sel { background: #d2d2d2; color: #217346; border-bottom: 3px solid #217346; }
.row th { border-right: 1px solid #999; border-bottom: 1px solid #b8b8b8; vertical-align: bottom; line-height: 32px; }
.row.head th { line-height: 38px; }
td { height: 35px; padding: 0; border-right: 1px solid #d4d4d4; border-bottom: 1px solid #d4d4d4; line-height: 34px; text-align: center; }
.head td { height: 44px; }
.big-title { font-size: 28px; font-weight: 700; line-height: 43px; }
.sub { font-weight: 700; font-style: italic; }
.notes td { height: 699px; line-height: 35px; white-space: nowrap; }
.notes .loss { position: relative; padding-left: 4px; text-align: left; vertical-align: top; }
.ink {
  position: absolute;
  left: 0;
  top: 0;
  overflow: visible;
  fill: none;
  stroke-linecap: round;
  stroke-linejoin: round;
}
.vscroll { display: flex; flex-direction: column; width: 38px; padding: 3px 3px 0 2px; }
.vscroll button, .hscroll button { background: #fff; border: 2px solid #b0b0b0; }
.vscroll button { height: 32px; }
.vtrack { flex: 1; background: #dadada; }
.vthumb { height: 204px; margin-top: 488px; background: #fff; border: 2px solid #b0b0b0; }

/* sheet tabs */
.sheetbar {
  display: flex;
  flex: none;
  align-items: center;
  height: 45px;
  border-top: 1px solid #999;
  border-bottom: 2px solid #c8c8c8;
}
.nav { display: flex; gap: 35px; padding-left: 34px; width: 145px; }
.sheettab {
  align-self: flex-start;
  width: 112px;
  height: 40px;
  margin-top: -1px;
  background: #fff;
  border: 1px solid #999;
  border-top: 0;
  border-bottom: 2px solid #217346;
  color: #217346;
  font-size: 25px;
  font-weight: 700;
}
.add { margin-left: 49px; }
.sheetbar .dots { margin-left: auto; }
.hscroll { display: flex; width: 966px; height: 34px; margin: 0 37px 0 20px; }
.hscroll button { width: 33px; }
.htrack { flex: 1; background: #dadada; }
.hthumb { width: 90%; height: 34px; background: #fff; border: 2px solid #b0b0b0; border-left: 0; }

/* status bar */
.status { display: flex; flex: none; align-items: stretch; height: 41px; background: #f3f3f3; font-size: 20px; line-height: 44px; }
.ready { margin-right: auto; padding-left: 15px; }
.view { width: 80px; }
.view.on { background: #c6c6c6; }
.zoom { padding: 0 11px 0 12px; }
.slider {
  appearance: none;
  width: 198px;
  background: linear-gradient(#b0b0b0, #b0b0b0) center / 100% 3px no-repeat, linear-gradient(#b0b0b0, #b0b0b0) center / 2px 16px no-repeat;
}
.slider::-webkit-slider-thumb { appearance: none; width: 10px; height: 22px; background: #666; }
.percent { width: 79px; padding-left: 13px; }

/* screen sharing strip, floats over the status bar */
.sharing {
  position: absolute;
  left: calc(50% - 382px);
  bottom: 0;
  display: flex;
  height: 44px;
  border-radius: 6px 6px 0 0;
  overflow: hidden;
  box-shadow: 0 0 8px rgba(0, 0, 0, .5);
}
.live { display: flex; align-items: center; width: 622px; padding-left: 14px; background: #4dc900; color: #262633; }
.live strong { margin-left: 69px; }
.live time { margin: 0 18px 0 auto; font-size: 21px; }
.live svg:last-child { margin: 0 22px 0 18px; }
.stop { width: 174px; gap: 13px; background: #fc3c3c; color: #fff; font-size: 21px; font-weight: 700; }
.square { width: 16px; height: 16px; border-radius: 2px; background: #fff; }
```
